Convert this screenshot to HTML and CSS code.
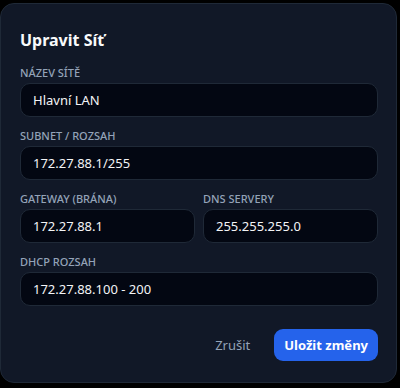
FILE: index.html
```html
<!DOCTYPE html>
<html>
<head>
    <title>Upravit Síť</title>
    <link rel="stylesheet" href="styles.css">
</head>
<body>
    <div class="modal">
        <h2>Upravit Síť</h2>
        <div class="form">
            <div class="field">
                <label>Název sítě</label>
                <input type="text" value="Hlavní LAN">
            </div>
            <div class="field">
                <label>Subnet / Rozsah</label>
                <input type="text" value="172.27.88.1/255">
            </div>
            <div class="row">
                <div class="field">
                    <label>Gateway (Brána)</label>
                    <input type="text" value="172.27.88.1">
                </div>
                <div class="field">
                    <label>DNS Servery</label>
                    <input type="text" value="255.255.255.0">
                </div>
            </div>
            <div class="field">
                <label>DHCP Rozsah</label>
                <input type="text" value="172.27.88.100 - 200">
            </div>
        </div>
        <div class="actions">
            <button class="cancel-btn">Zrušit</button>
            <button class="save-btn">Uložit změny</button>
        </div>
    </div>
</body>
</html>
```

FILE: styles.css
```css
body {
    margin: 0;
    background: #000;
    font-family: 'Noto Sans', 'Open Sans', sans-serif;
    padding: 3px 3px 0 0;
}
.modal {
    background: #111827;
    border: 1px solid #1f2937;
    border-radius: 14px;
    padding: 22px 18px 21px 19px;
    height: 380px;
    box-sizing: border-box;
}
h2 {
    margin: 0 0 11px;
    font-size: 16px;
    line-height: 28px;
    font-weight: 700;
    color: #f9fafb;
}
.form {
    display: flex;
    flex-direction: column;
    gap: 11px;
}
.row {
    display: grid;
    grid-template-columns: 1fr 1fr;
    gap: 8px;
}
.field {
    display: flex;
    flex-direction: column;
    gap: 2px;
}
label {
    font-size: 11px;
    line-height: 16px;
    font-weight: 500;
    text-transform: uppercase;
    color: #94a3b8;
}
input {
    height: 34px;
    box-sizing: border-box;
    background: #030712;
    border: 1px solid #1f2937;
    border-radius: 10px;
    padding: 0 12px;
    color: #f3f4f6;
    font-family: inherit;
    font-size: 13px;
    width: 100%;
}
.actions {
    display: flex;
    justify-content: flex-end;
    align-items: center;
    gap: 12px;
    margin-top: 23px;
}
button {
    font-family: inherit;
    font-size: 13px;
    border: none;
    cursor: pointer;
    height: 32px;
    border-radius: 9px;
}
.cancel-btn {
    background: none;
    color: #94a3b8;
    padding: 0 12px;
}
.save-btn {
    background: #2563eb;
    color: #fff;
    font-weight: 700;
    padding: 0 10px;
}
```
